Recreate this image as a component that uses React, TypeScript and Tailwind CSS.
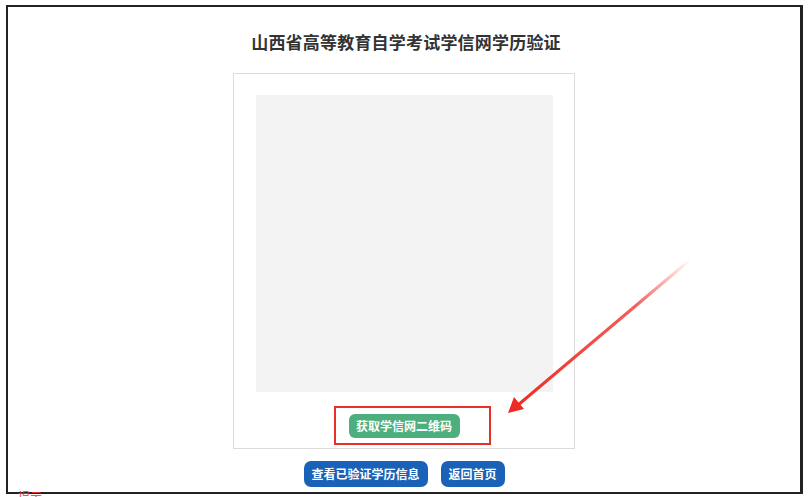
import React from 'react';

const font = { fontFamily: '"Noto Sans CJK SC", "Microsoft YaHei", sans-serif' };

export default function App() {
  return (
    <div className="w-[812px] h-[497px] bg-white overflow-hidden pt-[5px] pl-[6px]" style={font}>
      <div className="relative w-[797px] h-[489px] border-2 border-[#222] border-r-[3px] flex flex-col items-center">
        <h1 className="mt-[22px] text-[17px] leading-[26px] font-bold text-[#333] tracking-[0.2px] ml-[4px]">
          山西省高等教育自学考试学信网学历验证
        </h1>

        {/* 二维码卡片 */}
        <div className="mt-[18px] w-[342px] h-[376px] border border-[#dcdcdc] flex flex-col items-center">
          <div className="mt-[21px] w-[297px] h-[297px] bg-[#f3f3f3]" />
          <div className="mt-[14px] ml-[16px] w-[157px] h-[39px] border-2 border-[#e8302a] flex items-center pl-[13px]">
            <button className="h-[24px] w-[111px] rounded-[6px] bg-[#4caf7d] text-white text-[12px] font-bold leading-none">
              获取学信网二维码
            </button>
          </div>
        </div>

        <div className="mt-[12px] flex gap-[13px]">
          <button className="h-[26px] w-[124px] rounded-[7px] bg-[#1a62b8] text-white text-[12px] font-bold leading-none">
            查看已验证学历信息
          </button>
          <button className="h-[26px] w-[64px] rounded-[7px] bg-[#1a62b8] text-white text-[12px] font-bold leading-none">
            返回首页
          </button>
        </div>

        <span className="absolute left-[10px] bottom-[-11px] text-[12px] text-[#e8302a] leading-none">提示</span>

        {/* 标注箭头 */}
        <svg className="absolute left-0 top-0 pointer-events-none" width="797" height="489">
          <defs>
            <linearGradient id="g" x1="682" y1="253" x2="500" y2="406" gradientUnits="userSpaceOnUse">
              <stop offset="0" stopColor="#ee2a24" stopOpacity="0" />
              <stop offset="0.3" stopColor="#ee2a24" stopOpacity="0.75" />
              <stop offset="1" stopColor="#ee2a24" />
            </linearGradient>
          </defs>
          <path d="M682 253 L510 398" stroke="url(#g)" strokeWidth="3" strokeLinecap="round" />
          <path d="M500 406 L506 390 L516 402 Z" fill="#ee2a24" />
        </svg>
      </div>
    </div>
  );
}
